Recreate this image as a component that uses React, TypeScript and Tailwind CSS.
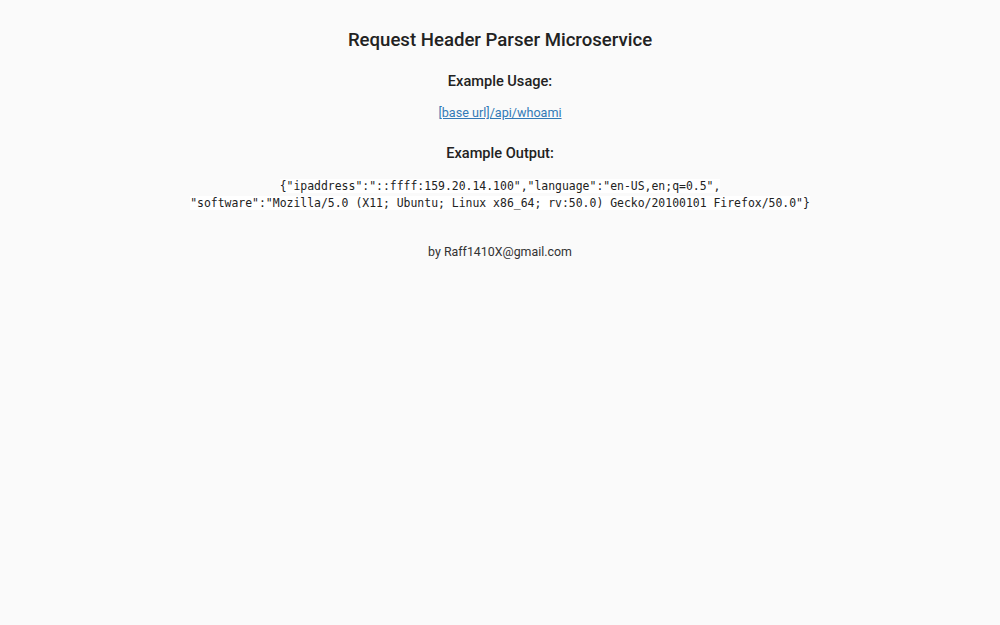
export default function App() {
  return (
    <div className="min-h-[625px] bg-[#fafafa] text-[#222] font-['Roboto',sans-serif] text-center pt-[29px]">
      <h1 className="text-[18.6px] font-medium leading-[22px]">Request Header Parser Microservice</h1>

      <h3 className="mt-[20px] text-[14.6px] font-medium leading-[20px]">Example Usage:</h3>
      <p className="mt-[14px] text-[12.6px] leading-[16px]">
        <a href="#" className="text-[#337ab7] underline">[base url]/api/whoami</a>
      </p>

      <h3 className="mt-[22px] text-[14.6px] font-medium leading-[20px]">Example Output:</h3>
      <p className="mt-[15px] mx-auto max-w-[700px] text-[11.45px] leading-[17px]">
        <code className="bg-white font-['DejaVu_Sans_Mono',monospace] text-[11.45px]">
          {'{"ipaddress":"::ffff:159.20.14.100","language":"en-US,en;q=0.5",'}
          <br />
          {'"software":"Mozilla/5.0 (X11; Ubuntu; Linux x86_64; rv:50.0) Gecko/20100101 Firefox/50.0"}'}
        </code>
      </p>

      <p className="mt-[32px] text-[12.4px] leading-[16px] text-[#333]">by Raff1410X@gmail.com</p>
    </div>
  );
}
